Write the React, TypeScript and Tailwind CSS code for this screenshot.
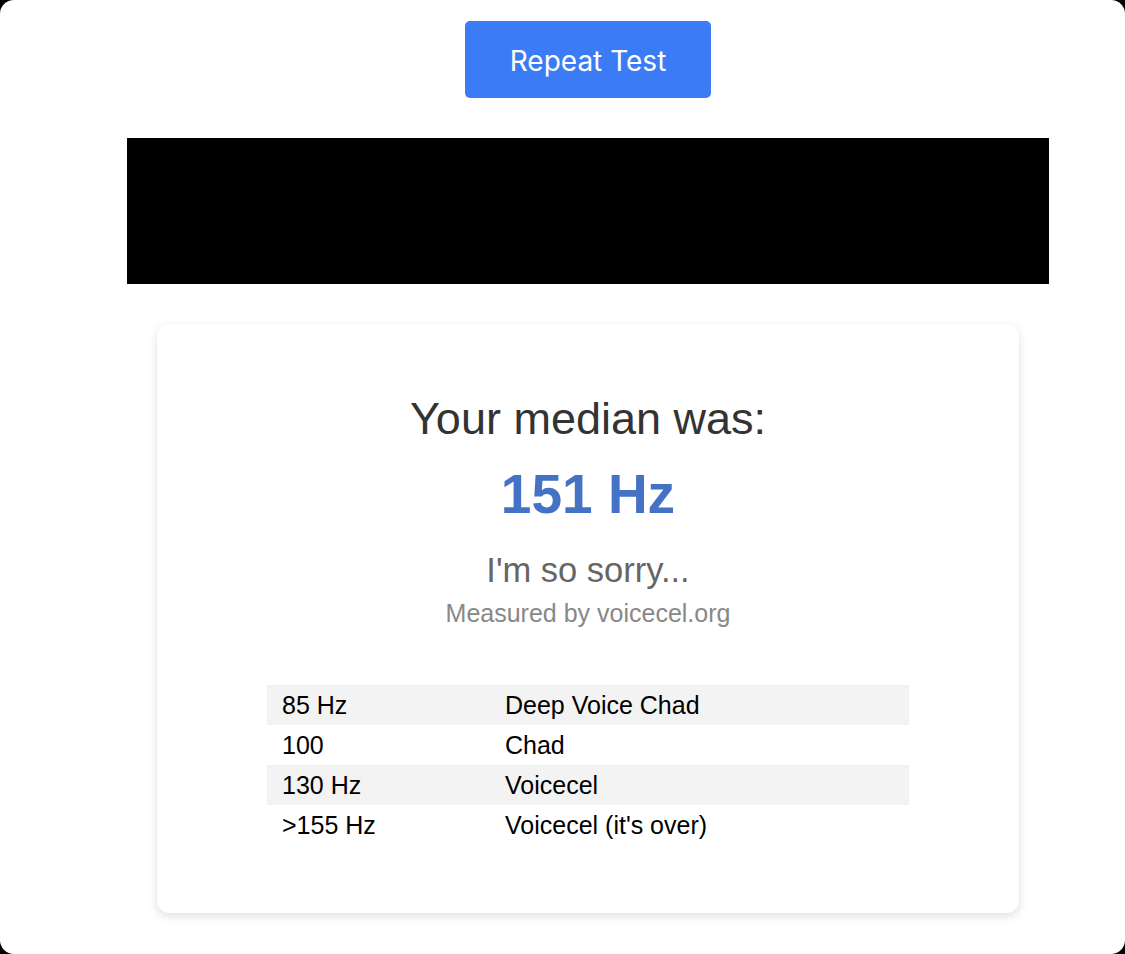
import React from "react";

const ROWS = [
  { hz: "85 Hz", label: "Deep Voice Chad" },
  { hz: "100", label: "Chad" },
  { hz: "130 Hz", label: "Voicecel" },
  { hz: ">155 Hz", label: "Voicecel (it's over)" },
];

export default function App() {
  return (
    <div className="h-[954px] bg-black">
      <div className="h-full bg-white rounded-[14px] overflow-hidden pl-[51px] pt-[21px] flex flex-col items-center font-['Liberation_Sans',Arial,sans-serif]">
        {/* Repeat button */}
        <button className="w-[246px] h-[77px] bg-[#3b7cf6] text-white rounded-[5px] text-[28px] pt-[2px] font-['Inter',sans-serif] shrink-0">
          Repeat Test
        </button>

        {/* black banner */}
        <div className="mt-[40px] w-[922px] h-[146px] bg-black shrink-0" />

        {/* result card */}
        <div className="mt-[40px] w-[862px] h-[589px] shrink-0 bg-white rounded-[12px] shadow-[0_3px_10px_rgba(0,0,0,0.13)] pt-[69px] flex flex-col items-center">
          <h2 className="text-[45px] leading-[1.15] text-[#333]">Your median was:</h2>
          <div className="mt-[18px] text-[55px] leading-[1.15] font-bold text-[#4472c4]">151 Hz</div>
          <p className="mt-[25px] text-[34.5px] leading-[1.15] text-[#666]">I'm so sorry...</p>
          <p className="mt-[8px] text-[25px] leading-[1.15] text-[#888]">Measured by voicecel.org</p>

          <table className="mt-[58px] w-[642px] text-[25px] text-black border-collapse">
            <tbody>
              {ROWS.map((r, i) => (
                <tr key={i} className={i % 2 === 0 ? "bg-[#f3f3f3]" : ""}>
                  <td className="h-[40px] w-[223px] pl-[15px] py-0">{r.hz}</td>
                  <td className="h-[40px] pl-[15px] py-0">{r.label}</td>
                </tr>
              ))}
            </tbody>
          </table>
        </div>
      </div>
    </div>
  );
}
